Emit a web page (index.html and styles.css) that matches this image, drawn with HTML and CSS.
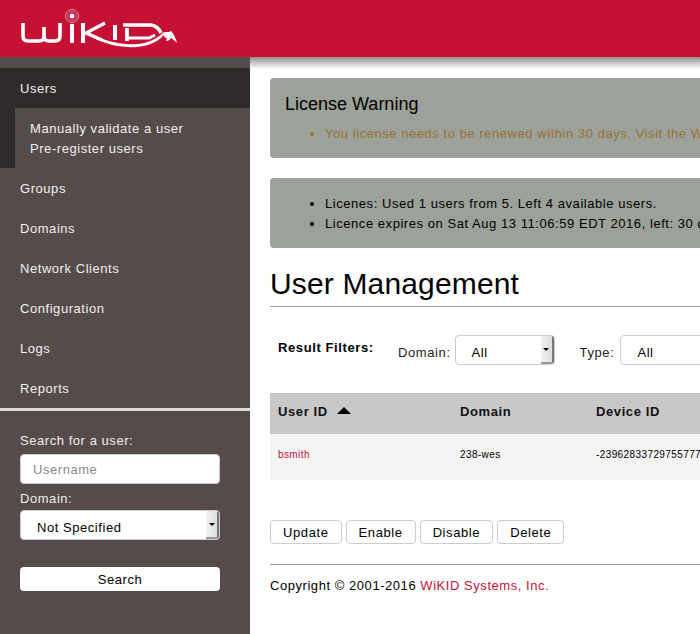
FILE: index.html
```html
<!DOCTYPE html>
<html lang="en">
<head>
<meta charset="utf-8">
<title>WiKID User Management</title>
<link rel="stylesheet" href="styles.css">
</head>
<body>
<header class="topbar">
  <svg class="logo" width="170" height="50" viewBox="0 0 170 50" aria-label="WiKID">
    <g fill="none" stroke="#fff" stroke-width="3.6">
      <path d="M13 18v13q0 5 5 5h11q5 0 5-5v-9M34 31q0 5 5 5h6q5 0 5-5v-13"/>
      <path d="M62 19v19" stroke-width="4"/>
      <path d="M73 18v20" stroke-width="4"/>
      <path d="M95 18 76 28l16 7" stroke-width="3.400"/>
      <path d="M105 20v15" stroke-width="4"/>
      <path d="M113 20h28q7 1 10 8" stroke-width="3.400"/>
      <path d="M117 23v13" stroke-width="3.800"/>
      <path d="M118 33h21l6-3" stroke-width="3"/>
    </g>
    <path d="M86 31c14 7 30 9 42 8 10-1 19-5 26-12l-2 5c-8 7-16 9-25 10-14 1-30-2-43-9z" fill="#fff"/>
    <path d="M152 29l3-2c3 0 5 0 6-1 3 3 5 8 6 12-2-2-4-4-6-5-1 2-3 3-5 3l1-3c-2 0-3-2-5-4z" fill="#fff"/>
    <circle cx="62" cy="11" r="6.500" fill="none" stroke="#e39aaa" stroke-width="1"/>
    <circle cx="62" cy="11" r="4.500" fill="none" stroke="#d56f85" stroke-width="1"/>
    <circle cx="62" cy="11" r="2.500" fill="#fff"/>
  </svg>
</header>
<div class="page">
  <aside class="sidebar">
    <nav class="nav">
      <div class="nav-active">
        <a class="nav-item">Users</a>
        <div class="subnav">
          <a class="sub-item">Manually validate a user</a>
          <a class="sub-item">Pre-register users</a>
        </div>
      </div>
      <a class="nav-item">Groups</a>
      <a class="nav-item">Domains</a>
      <a class="nav-item">Network Clients</a>
      <a class="nav-item">Configuration</a>
      <a class="nav-item">Logs</a>
      <a class="nav-item">Reports</a>
    </nav>
    <form class="search">
      <label class="search-label">Search for a user:</label>
      <input class="search-input" type="text" placeholder="Username">
      <label class="search-label domain-label">Domain:</label>
      <div class="select select-side">
        <span class="select-text">Not Specified</span>
        <span class="select-btn"><i class="caret"></i></span>
      </div>
      <button class="search-btn" type="button">Search</button>
    </form>
  </aside>
  <main class="main">
    <section class="notice notice-warn">
      <h3 class="notice-title">License Warning</h3>
      <ul class="notice-list warn-list">
        <li>You license needs to be renewed within 30 days. Visit the WiKID website to renew your license.</li>
      </ul>
    </section>
    <section class="notice notice-info">
      <ul class="notice-list">
        <li>Licenes: Used 1 users from 5. Left 4 available users.</li>
        <li>Licence expires on Sat Aug 13 11:06:59 EDT 2016, left: 30 days.</li>
      </ul>
    </section>
    <h1 class="title">User Management</h1>
    <div class="filters">
      <strong class="filters-label">Result Filters:</strong>
      <span class="filter-name filter-domain">Domain:</span>
      <div class="select select-filter">
        <span class="select-text">All</span>
        <span class="select-btn"><i class="caret"></i></span>
      </div>
      <span class="filter-name filter-type">Type:</span>
      <div class="select select-filter select-type">
        <span class="select-text">All</span>
        <span class="select-btn"><i class="caret"></i></span>
      </div>
    </div>
    <table class="users">
      <thead>
        <tr>
          <th class="col-user">User ID <i class="sort-up"></i></th>
          <th class="col-domain">Domain</th>
          <th class="col-device">Device ID</th>
          <th class="col-rest"></th>
        </tr>
      </thead>
      <tbody>
        <tr>
          <td><a class="link">bsmith</a></td>
          <td>238-wes</td>
          <td>-2396283372975577777</td>
          <td></td>
        </tr>
      </tbody>
    </table>
    <div class="actions">
      <button class="action" type="button">Update</button>
      <button class="action" type="button">Enable</button>
      <button class="action" type="button">Disable</button>
      <button class="action" type="button">Delete</button>
    </div>
    <footer class="footer">Copyright © 2001-2016 <a class="link">WiKID Systems, Inc.</a></footer>
  </main>
</div>
</body>
</html>
```
FILE: styles.css
```css
* { box-sizing: border-box; }
html, body { margin: 0; height: 634px; overflow: hidden; background: #fff; }
body { font-family: "Liberation Sans", Arial, sans-serif; font-size: 13px; letter-spacing: 0.55px; color: #000; }

.topbar { height: 57px; background: #c41134; padding: 5px 0 0 10px; position: relative; z-index: 1; }
.logo { display: block; }

.page { display: flex; height: 577px; }

.sidebar { width: 250px; flex: none; background: #554b4b; padding-top: 11px; color: #fff; }
.nav-active { background: #2f2b2b; }
.nav-item { display: block; height: 40px; line-height: 42px; padding-left: 20px; color: #f2f0f0; }
.subnav { margin-left: 15px; background: #554b4b; padding: 10px 0; height: 60px; }
.sub-item { display: block; height: 20px; line-height: 22px; padding-left: 15px; color: #f2f0f0; }
.nav { border-bottom: 3px solid #dcdcdc; }

.search { padding: 20px 30px 0 20px; display: flex; flex-direction: column; }
.search-label { display: block; line-height: 20px; color: #eee; height: 23px; }
.domain-label { height: 23px; margin-top: 3px; padding-top: 3px; line-height: 18px; }
.search-input { width: 200px; height: 30px; border: 1px solid #ccc; border-radius: 4px; background: #fff; padding: 0 12px; font: inherit; letter-spacing: 0.55px; }
.search-input::placeholder { color: #888; opacity: 1; }
.select { display: flex; align-items: center; justify-content: space-between; height: 30px; background: #fff; border: 1px solid #ccc; border-radius: 4px; color: #000; overflow: hidden; }
.select-side { width: 200px; padding-left: 16px; }
.select-text { display: block; padding-top: 5px; }
.select-btn { width: 13px; height: 28px; background: linear-gradient(90deg, #f2f2f2, #dedede); border-right: 2px solid #777; border-bottom: 2px solid #999; display: flex; align-items: center; justify-content: center; flex: none; }
.caret { display: block; width: 0; height: 0; border-left: 3px solid transparent; border-right: 3px solid transparent; border-top: 3px solid #000; }
.search-btn { width: 200px; height: 24px; margin-top: 27px; border: 0; border-radius: 4px; background: #fff; color: #000; font: inherit; letter-spacing: 0.55px; padding: 0; }

.main { flex: 1; min-width: 0; padding: 21px 0 0 20px; position: relative; overflow: hidden; }
.main::before { content: ""; position: absolute; left: 0; right: 0; top: 0; height: 12px; background: linear-gradient(#8f8f8f, #fff); }
.notice { width: 700px; background: #9ca199; border-radius: 4px; position: relative; }
.notice-warn { height: 80px; padding: 15px; }
.notice-info { height: 70px; margin-top: 20px; padding: 16px 15px 0; }
.notice-title { margin: 0; font-size: 18px; font-weight: 400; line-height: 22px; letter-spacing: 0; color: #000; }
.notice-list { margin: 0; padding: 0 0 0 40px; list-style: disc; line-height: 20px; white-space: nowrap; }
.warn-list { color: #9a7238; margin-top: 9px; }

.title { margin: 22px 0 0; height: 37px; width: 700px; font-size: 30px; font-weight: 400; line-height: 28px; letter-spacing: 0.15px; border-bottom: 1px solid #999; padding-top: 0; }

.filters { width: 700px; height: 86px; display: flex; align-items: flex-start; padding: 28px 0 0 8px; }
.filters-label { font-weight: 700; width: 120px; line-height: 20px; padding-top: 3px; flex: none; letter-spacing: 0.6px; }
.filter-name { line-height: 18px; padding-top: 9px; flex: none; color: #222; letter-spacing: 0.6px; }
.select-filter { width: 100px; flex: none; padding-left: 16px; margin-left: 4px; }
.filter-type { margin-left: 25px; }
.select-type { margin-left: 6px; }

.users { width: 800px; border-collapse: collapse; table-layout: fixed; }
.users th { height: 41px; background: #c8c8c8; text-align: left; padding: 0 8px 4px; font-size: 13px; font-weight: 700; color: #111; letter-spacing: 0.6px; }
.users td { height: 46px; background: #f4f4f4; padding: 0 8px 6px; font-size: 10px; letter-spacing: 0.4px; white-space: nowrap; overflow: hidden; color: #000; }
.col-user { width: 182px; }
.col-domain { width: 136px; }
.col-device { width: 250px; }
.sort-up { display: inline-block; width: 0; height: 0; margin-left: 5px; vertical-align: 2px; border-left: 7px solid transparent; border-right: 7px solid transparent; border-bottom: 7px solid #000; }
.link { color: #c41134; }

.actions { display: flex; gap: 4px; margin-top: 40px; width: 700px; }
.action { height: 24px; border: 1px solid #ccc; border-radius: 4px; background: #fff; font: inherit; letter-spacing: 0.6px; padding: 0 12px; color: #000; }
.footer { margin-top: 20px; width: 700px; border-top: 1px solid #999; padding-top: 13px; line-height: 16px; }
```
